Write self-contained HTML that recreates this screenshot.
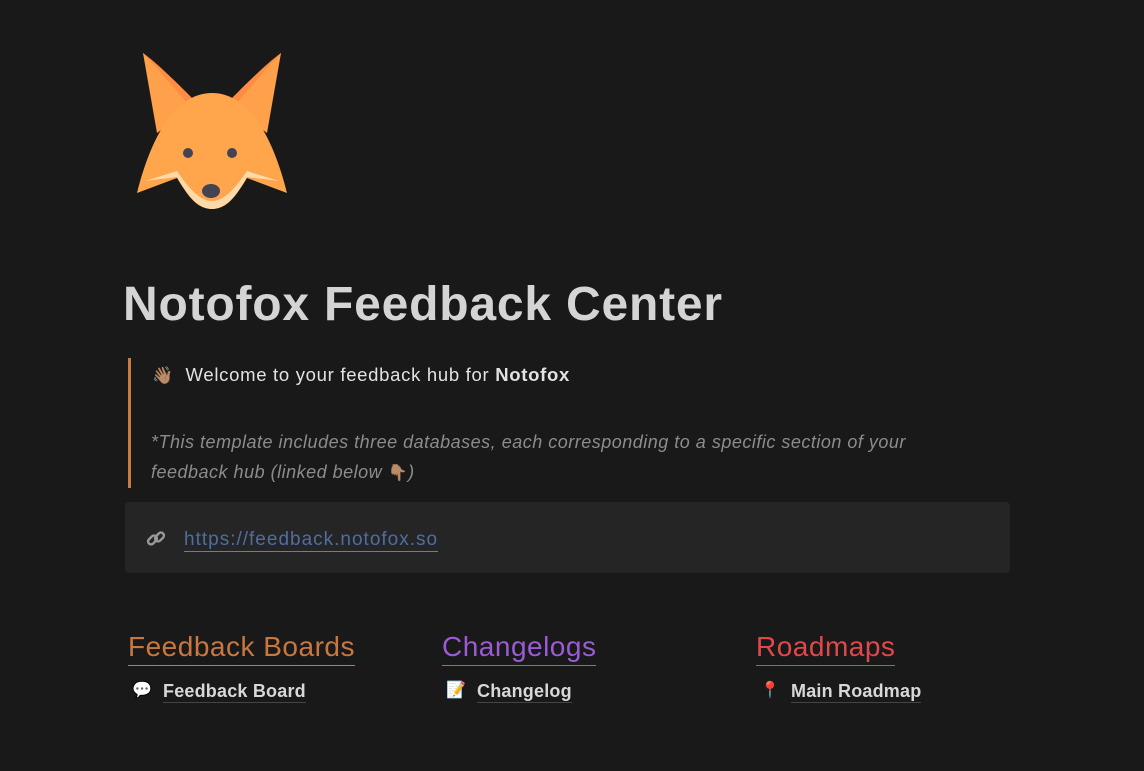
<!DOCTYPE html>
<html><head><meta charset="utf-8"><style>
body{margin:0;background:#191919;width:1144px;height:771px;overflow:hidden;font-family:"Liberation Sans","Noto Sans CJK JP",sans-serif;color:#d4d4d4;position:relative}
.abs{position:absolute}
h1{position:absolute;left:123px;top:277px;margin:0;font-size:48px;font-weight:bold;color:#d4d4d4;letter-spacing:0.8px}
.quote{left:128px;top:358px;width:3px;height:130px;background:#c87a40}
.t1{left:152px;top:364px;font-size:18.5px;color:#e2e2e2;letter-spacing:0.7px}
.it{left:151px;top:427px;font-size:18px;font-style:italic;color:#8c8c8c;line-height:30px;width:775px;letter-spacing:0.5px}
.box{left:125px;top:502px;width:885px;height:71px;background:#252525;border-radius:4px}
.link{left:184px;top:529px;font-size:19px;color:#4f6e9f;border-bottom:1px solid #5a7fc0;line-height:22px;letter-spacing:1px}
.h{font-size:28px;top:631px;line-height:32px;padding-bottom:2px;letter-spacing:0.5px}
.item{top:680px;font-size:18px;font-weight:bold;color:#d8d8d8;border-bottom:1px solid #444;line-height:22px;letter-spacing:0.2px}
.ic{top:680px;font-size:16px}
</style></head><body>
<svg class="abs" style="left:137px;top:53px" width="150" height="158" viewBox="0 0 150 158">
<path d="M6 0 C20 10 40 30 55 45 L30 95 Z" fill="#ff8c42"/>
<path d="M144 0 C130 10 110 30 95 45 L120 95 Z" fill="#ff8c42"/>
<path d="M6 0 C25 20 45 45 55 55 L20 80 Z" fill="#ffa04a"/>
<path d="M144 0 C125 20 105 45 95 55 L130 80 Z" fill="#ffa04a"/>
<path d="M75 40 C40 40 15 80 0 140 L40 125 C55 150 62 155 75 156 C88 155 95 150 110 125 L150 140 C135 80 110 40 75 40 Z" fill="#ffa64d"/>
<path d="M8 128 L40 118 C55 140 65 148 75 148 C85 148 95 140 110 118 L142 128 L110 124 C98 145 88 156 75 156 C62 156 52 145 40 124 Z" fill="#ffd9a8"/>
<circle cx="51" cy="100" r="5" fill="#434351"/>
<circle cx="95" cy="100" r="5" fill="#434351"/>
<ellipse cx="74" cy="138" rx="9" ry="7" fill="#434351"/>
</svg>
<h1>Notofox Feedback Center</h1>
<div class="abs quote"></div>
<div class="abs t1"><span style="font-size:17px">👋🏽</span>&nbsp; Welcome to your feedback hub for <b>Notofox</b></div>
<div class="abs it">*This template includes three databases, each corresponding to a specific section of your feedback hub (linked below <span style="font-style:normal;font-size:16px">👇🏽</span>)</div>
<div class="abs box"></div>
<svg class="abs" style="left:146px;top:529px" width="20" height="20" viewBox="0 0 20 20" fill="none" stroke="#9a9a9a" stroke-width="2.4"><rect x="1.5" y="8" width="10" height="6" rx="3" transform="rotate(-45 6.5 11)"/><rect x="8.5" y="5" width="10" height="6" rx="3" transform="rotate(-45 13.5 8)"/></svg>
<div class="abs link">https://feedback.notofox.so</div>
<div class="abs h" style="left:128px;color:#c8773e;border-bottom:1px solid #c8773e">Feedback Boards</div>
<div class="abs h" style="left:442px;color:#9b5ad6;border-bottom:1px solid #9b5ad6">Changelogs</div>
<div class="abs h" style="left:756px;color:#e0484a;border-bottom:1px solid #e0484a">Roadmaps</div>
<div class="abs ic" style="left:132px">💬</div><div class="abs item" style="left:163px">Feedback Board</div>
<div class="abs ic" style="left:446px">📝</div><div class="abs item" style="left:477px">Changelog</div>
<div class="abs ic" style="left:760px">📍</div><div class="abs item" style="left:791px">Main Roadmap</div>
</body></html>
